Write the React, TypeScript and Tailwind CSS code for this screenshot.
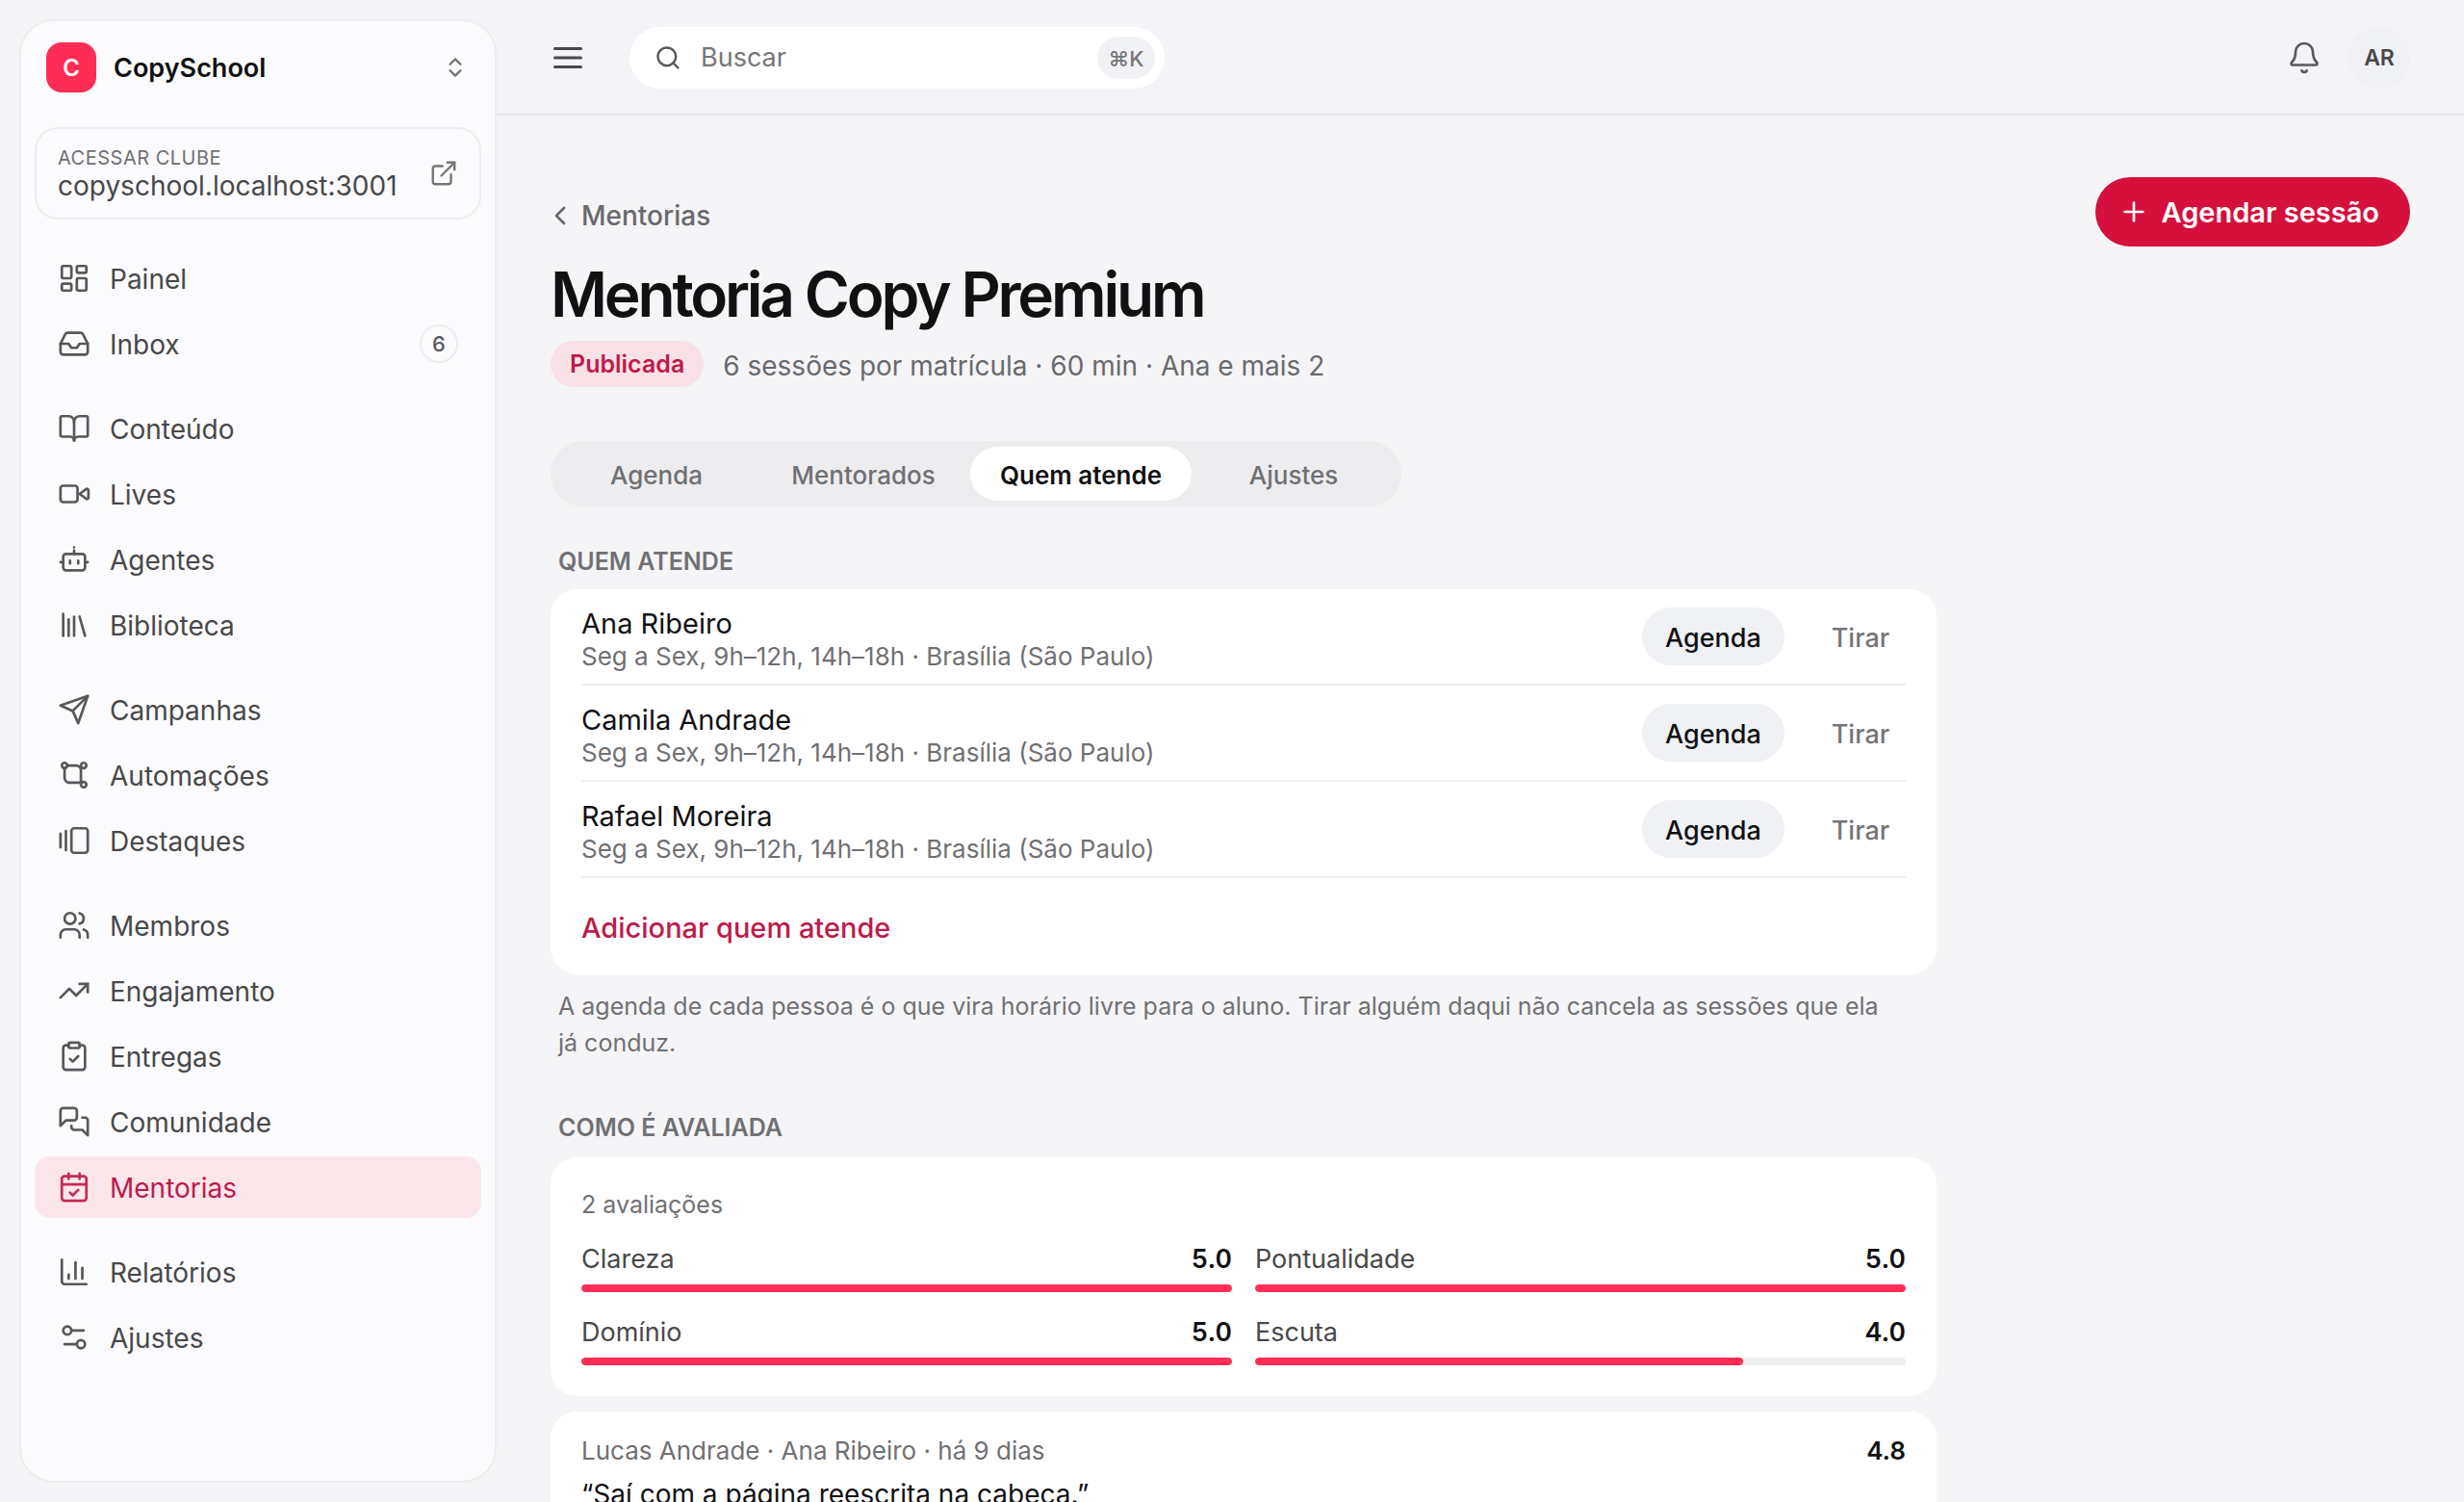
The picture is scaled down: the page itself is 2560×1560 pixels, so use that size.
import type { ReactNode } from 'react';
import {
  Bell,
  BookOpen,
  CalendarCheck,
  ChartColumn,
  ChevronLeft,
  ChevronsUpDown,
  ClipboardCheck,
  ExternalLink,
  GalleryHorizontalEnd,
  Inbox,
  LayoutDashboard,
  Library,
  Plus,
  Search,
  Settings2,
  TrendingUp,
  Users,
} from 'lucide-react';

// ============================================================
// ICONS — the ones lucide draws differently
// ============================================================

function Icon({ children }: { children: ReactNode }) {
  return (
    <svg
      viewBox="0 0 24 24"
      className="size-[34px] shrink-0"
      fill="none"
      stroke="currentColor"
      strokeWidth={1.9}
      strokeLinecap="round"
      strokeLinejoin="round"
      aria-hidden="true"
    >
      {children}
    </svg>
  );
}

const VideoIcon = (
  <Icon>
    <rect x="2" y="6" width="12.5" height="12" rx="2" />
    <path d="M16 12l5-3.6a1 1 0 0 1 1.5.8v5.6a1 1 0 0 1-1.5.8z" />
  </Icon>
);

const BotIcon = (
  <Icon>
    <path d="M12 8V5.5M12 3.2v.01" />
    <rect x="4" y="8" width="16" height="12" rx="2" />
    <path d="M2 14h2M20 14h2M15 13v2M9 13v2" />
  </Icon>
);

const SendIcon = (
  <Icon>
    <path d="m22 2-7 20-4-9-9-4Z" />
    <path d="M22 2 11 13" />
  </Icon>
);

const FlowIcon = (
  <Icon>
    <circle cx="5" cy="5" r="2" />
    <circle cx="19" cy="5" r="2" />
    <circle cx="19" cy="19" r="2" />
    <path d="M5 7v7a3.5 3.5 0 0 0 3.5 3.5H17.5" />
    <path d="M7 5h6.5a3.5 3.5 0 0 1 3.5 3.5v9" />
  </Icon>
);

const ChatIcon = (
  <Icon>
    <path d="M14 9a2 2 0 0 1-2 2H6l-4 4V4c0-1.1.9-2 2-2h8a2 2 0 0 1 2 2v5Z" />
    <path d="M18 9h2a2 2 0 0 1 2 2v11l-4-4h-6a2 2 0 0 1-2-2v-1" />
  </Icon>
);

// ============================================================
// DATA
// ============================================================

interface NavItem {
  label: string;
  icon: ReactNode;
  count?: number;
  active?: boolean;
}

const navGroups: NavItem[][] = [
  [
    { label: 'Painel', icon: <LayoutDashboard size={34} strokeWidth={1.9} /> },
    { label: 'Inbox', icon: <Inbox size={34} strokeWidth={1.9} />, count: 6 },
  ],
  [
    { label: 'Conteúdo', icon: <BookOpen size={34} strokeWidth={1.9} /> },
    { label: 'Lives', icon: VideoIcon },
    { label: 'Agentes', icon: BotIcon },
    { label: 'Biblioteca', icon: <Library size={34} strokeWidth={1.9} /> },
  ],
  [
    { label: 'Campanhas', icon: SendIcon },
    { label: 'Automações', icon: FlowIcon },
    { label: 'Destaques', icon: <GalleryHorizontalEnd size={34} strokeWidth={1.9} /> },
  ],
  [
    { label: 'Membros', icon: <Users size={34} strokeWidth={1.9} /> },
    { label: 'Engajamento', icon: <TrendingUp size={34} strokeWidth={1.9} /> },
    { label: 'Entregas', icon: <ClipboardCheck size={34} strokeWidth={1.9} /> },
    { label: 'Comunidade', icon: ChatIcon },
    { label: 'Mentorias', icon: <CalendarCheck size={34} strokeWidth={1.9} />, active: true },
  ],
  [
    { label: 'Relatórios', icon: <ChartColumn size={34} strokeWidth={1.9} /> },
    { label: 'Ajustes', icon: <Settings2 size={34} strokeWidth={1.9} /> },
  ],
];

const tabs = [
  { label: 'Agenda', width: 'w-[208px]' },
  { label: 'Mentorados', width: 'w-[222px]' },
  { label: 'Quem atende', width: 'w-[230px]' },
  { label: 'Ajustes', width: 'w-[212px]' },
];

const mentors = ['Ana Ribeiro', 'Camila Andrade', 'Rafael Moreira'];
const schedule = 'Seg a Sex, 9h–12h, 14h–18h · Brasília (São Paulo)';

const scores = [
  { label: 'Clareza', value: 5 },
  { label: 'Pontualidade', value: 5 },
  { label: 'Domínio', value: 5 },
  { label: 'Escuta', value: 4 },
];

// ============================================================
// SIDEBAR
// ============================================================

function Sidebar() {
  return (
    <aside className="my-5 ml-5 flex w-[496px] shrink-0 flex-col rounded-[36px] border-2 border-[#ededef] bg-[#fbfbfd] px-3.5 pt-[22px]">
      <button type="button" className="flex items-center pr-3.5 pl-3 text-left">
        <span className="flex size-[52px] items-center justify-center rounded-2xl bg-[#ff2d55] pt-0.5 text-2xl font-semibold text-white">
          C
        </span>
        <span className="ml-[18px] flex-1 pt-0.5 text-[27px] font-semibold text-[#111113]">CopySchool</span>
        <ChevronsUpDown size={26} strokeWidth={2.2} className="text-[#757578]" />
      </button>

      <a
        href="#clube"
        className="mt-9 flex h-24 items-center rounded-3xl border-2 border-[#ededef] px-[22px]"
      >
        <span className="flex flex-1 flex-col">
          <span className="text-xl leading-[26px] tracking-wide text-[#707073] uppercase">Acessar clube</span>
          <span className="text-[28px] leading-8 text-[#48484a]">copyschool.localhost:3001</span>
        </span>
        <ExternalLink size={30} strokeWidth={1.9} className="text-[#757578]" />
      </a>

      <nav className="mt-[29px] flex flex-col gap-6">
        {navGroups.map((group, i) => (
          <ul key={i} className="flex flex-col gap-1">
            {group.map(item => (
              <li key={item.label}>
                <a
                  href={`#${item.label.toLowerCase()}`}
                  aria-current={item.active ? 'page' : undefined}
                  className={`flex h-16 items-center gap-5 rounded-2xl px-6 text-[28px] ${
                    item.active ? 'bg-[#fbe7eb] text-[#bf1a49]' : 'text-[#48484a]'
                  }`}
                >
                  <span className={item.active ? 'text-[#c52a55]' : 'text-[#58585b]'}>{item.icon}</span>
                  <span className="flex-1 pt-0.5">{item.label}</span>
                  {item.count && (
                    <span className="flex size-10 items-center justify-center rounded-full border-2 border-[#ededef] text-[22px] font-medium text-[#58585b]">
                      {item.count}
                    </span>
                  )}
                </a>
              </li>
            ))}
          </ul>
        ))}
      </nav>
    </aside>
  );
}

// ============================================================
// TOP BAR
// ============================================================

function TopBar() {
  return (
    <header className="flex h-[120px] shrink-0 items-center border-b-2 border-[#e6e6ea] bg-[#f4f3f8] px-14 pt-0.5">
      <button type="button" aria-label="Recolher menu" className="text-[#48484a]">
        <svg viewBox="0 0 36 36" className="size-9" stroke="currentColor" strokeWidth={3} strokeLinecap="round" aria-hidden="true">
          <path d="M4.5 8.5h27M4.5 18h27M4.5 27.5h27" />
        </svg>
      </button>
      <label className="ml-[46px] flex h-16 w-[556px] items-center rounded-full bg-white pr-2.5 pl-[26px]">
        <Search size={28} strokeWidth={2.1} className="text-[#58585b]" />
        <input
          type="search"
          aria-label="Buscar"
          placeholder="Buscar"
          className="ml-5 min-w-0 flex-1 bg-transparent text-[27px] outline-none placeholder:text-[#757578]"
        />
        <kbd className="flex h-11 w-15 items-center justify-center rounded-full bg-[#f1f2f5] pt-0.5 font-['Inter','DejaVu_Sans',sans-serif] text-[22px] font-medium text-[#757578]">
          ⌘K
        </kbd>
      </label>
      <div className="ml-auto flex items-center gap-7">
        <button type="button" aria-label="Notificações" className="text-[#58585b]">
          <Bell size={36} strokeWidth={1.8} />
        </button>
        <button
          type="button"
          aria-label="Conta"
          className="flex size-16 items-center justify-center rounded-full bg-[#f0f1f5] text-[23px] font-semibold text-[#48484a]"
        >
          AR
        </button>
      </div>
    </header>
  );
}

// ============================================================
// PAGE SECTIONS
// ============================================================

function PageHeader() {
  return (
    <div className="flex items-start justify-between">
      <div className="pt-5">
        <a href="#mentorias" className="-ml-1.5 flex h-10 items-center gap-1.5 text-[28px] font-medium text-[#69696c]">
          <ChevronLeft size={32} strokeWidth={2} />
          Mentorias
        </a>
        <h1 className="mt-[22px] text-[64px] leading-20 font-semibold tracking-tighter text-[#111113]">
          Mentoria Copy Premium
        </h1>
        <div className="mt-2 flex items-center gap-5">
          <span className="flex h-12 items-center rounded-full bg-[#f8e1e7] px-5 pt-0.5 text-[25px] font-semibold text-[#bf1a49]">
            Publicada
          </span>
          <p className="pt-1 text-[28px] leading-9 text-[#69696c]">6 sessões por matrícula · 60 min · Ana e mais 2</p>
        </div>
      </div>
      <button
        type="button"
        className="flex h-[72px] items-center gap-3 rounded-full bg-[#d5103c] pr-8 pl-6 text-[29px] font-semibold text-white"
      >
        <Plus size={32} strokeWidth={2} />
        <span className="pt-0.5">Agendar sessão</span>
      </button>
    </div>
  );
}

function Tabs() {
  return (
    <div role="tablist" className="mt-14 flex h-[68px] w-fit rounded-full bg-[#ededef] p-1.5">
      {tabs.map(tab => {
        const active = tab.label === 'Quem atende';
        return (
          <button
            key={tab.label}
            type="button"
            role="tab"
            aria-selected={active}
            className={`rounded-full pt-0.5 text-[26px] ${tab.width} ${
              active ? 'bg-white font-semibold text-[#111113]' : 'font-medium text-[#707073]'
            }`}
          >
            {tab.label}
          </button>
        );
      })}
    </div>
  );
}

function Mentors() {
  return (
    <section className="mt-10">
      <h2 className="px-2 text-[25px] leading-[34px] font-semibold text-[#707073] uppercase">Quem atende</h2>
      <div className="mt-3 rounded-[28px] bg-white px-8">
        <ul>
          {mentors.map(name => (
            <li key={name} className="flex h-[100px] items-center gap-8 border-b-2 border-[#efeff0]">
              <div className="flex-1 pt-2">
                <p className="text-[29px] leading-[34px] text-[#111113]">{name}</p>
                <p className="text-[26px] leading-[34px] text-[#707073]">{schedule}</p>
              </div>
              <button type="button" className="h-15 w-[148px] rounded-full bg-[#f0f1f5] pt-1 text-[27px] font-medium text-[#111113]">
                Agenda
              </button>
              <button type="button" className="h-15 w-[94px] rounded-full pt-1 text-[27px] font-medium text-[#757578]">
                Tirar
              </button>
            </li>
          ))}
        </ul>
        <button type="button" className="h-[100px] pt-1 text-[29px] font-medium text-[#bf1a49]">
          Adicionar quem atende
        </button>
      </div>
      <p className="mt-3.5 pr-12 pl-2 text-[25px] leading-[38px] text-[#707073]">
        A agenda de cada pessoa é o que vira horário livre para o aluno. Tirar alguém daqui não cancela as sessões que ela
        já conduz.
      </p>
    </section>
  );
}

function Ratings() {
  return (
    <section className="mt-13">
      <h2 className="px-2 text-[25px] leading-[34px] font-semibold text-[#707073] uppercase">Como é avaliada</h2>
      <div className="mt-3.5 rounded-[28px] bg-white p-8">
        <p className="text-[25px] leading-[34px] text-[#707073]">2 avaliações</p>
        <div className="mt-[22px] grid grid-cols-2 gap-6">
          {scores.map(score => (
            <div key={score.label}>
              <div className="flex justify-between text-[27px] leading-9">
                <span className="text-[#48484a]">{score.label}</span>
                <span className="font-semibold text-[#111113] tabular-nums">{score.value.toFixed(1)}</span>
              </div>
              <div className="mt-2 h-2 overflow-hidden rounded-full bg-[#efeff0]">
                {/* the scale runs from 1 to 5 */}
                <div className="h-full rounded-full bg-[#ff2d55]" style={{ width: `${((score.value - 1) / 4) * 100}%` }} />
              </div>
            </div>
          ))}
        </div>
      </div>

      <article className="mt-4 rounded-[28px] bg-white px-8 pt-6 pb-8">
        <div className="flex justify-between text-[26px] leading-[34px]">
          <p className="text-[#707073]">Lucas Andrade · Ana Ribeiro · há 9 dias</p>
          <span className="font-semibold text-[#111113] tabular-nums">4.8</span>
        </div>
        <p className="mt-2 text-[28px] leading-10 text-[#111113]">“Saí com a página reescrita na cabeça.”</p>
      </article>
    </section>
  );
}

export default function App() {
  return (
    <div className="flex h-screen overflow-hidden bg-[#f5f5f7] font-['Inter',sans-serif]">
      <Sidebar />
      <div className="flex min-w-0 flex-1 flex-col">
        <TopBar />
        <main className="min-h-0 flex-1 overflow-hidden px-14 pt-16">
          <PageHeader />
          <Tabs />
          <div className="max-w-[1440px]">
            <Mentors />
            <Ratings />
          </div>
        </main>
      </div>
    </div>
  );
}
